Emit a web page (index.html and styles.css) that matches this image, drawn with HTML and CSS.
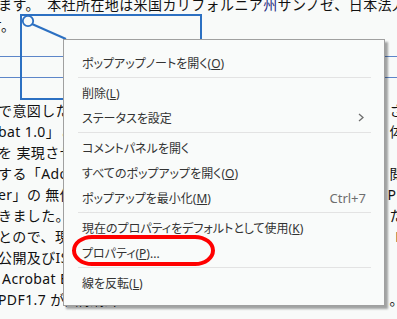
FILE: index.html
```html
<!doctype html>
<html>
<head>
<title>注釈メニュー</title>
<meta charset="utf-8">
<link rel="stylesheet" href="styles.css">
</head>
<body>
	<div class="doc">
		<div class="line first">ます。　本社所在地は米国カリフォルニア<span class="lnk">州</span>サンノゼ、日本法人</div>
		<div class="line second">す。</div>
		<div class="band"></div>
		<div class="para">
			<div class="row"><span>で意図したとおりの表示を</span><span>さ</span></div>
			<div class="row"><span>bat 1.0」とともに発表し</span><span>体</span></div>
			<div class="row"><span>を 実現させることに成功</span><span></span></div>
			<div class="row"><span>する「Adobe Reader」</span><span>閲</span></div>
			<div class="row"><span>er」の 無償配布を開始</span><span>PF</span></div>
			<div class="row"><span>きました。その後</span><span>た</span></div>
			<div class="row"><span>とので、現在では</span><span>P</span></div>
			<div class="row"><span>公開及びISO化</span><span></span></div>
			<div class="row"><span>&nbsp;Acrobat Elements</span><span></span></div>
			<div class="row"><span>PDF1.7 が国際標準</span><span>。</span></div>
		</div>
	</div>

	<!-- 注釈の枠とピン -->
	<div class="annot"></div>
	<svg class="pin" width="70" height="45" viewBox="0 0 70 45">
		<line x1="32" y1="24" x2="66" y2="39" stroke="#2c70c2" stroke-width="2"/>
		<circle cx="28" cy="21" r="5.2" fill="#f8faf9" stroke="#2c70c2" stroke-width="1.8"/>
	</svg>

	<div class="menu">
		<div class="item"><span>ポップアップノートを開く(<u>O</u>)</span></div>
		<div class="sep"></div>
		<div class="item"><span>削除(<u>L</u>)</span></div>
		<div class="item"><span>ステータスを設定</span><svg class="chev" width="6" height="9" viewBox="0 0 6 9"><path d="M1 1 L5 4.5 L1 8" fill="none" stroke="#6e6e6e" stroke-width="1.3"/></svg></div>
		<div class="sep"></div>
		<div class="item"><span>コメントパネルを開く</span></div>
		<div class="item"><span>すべてのポップアップを開く(<u>O</u>)</span></div>
		<div class="item"><span>ポップアップを最小化(<u>M</u>)</span><span class="key">Ctrl+7</span></div>
		<div class="sep"></div>
		<div class="item"><span>現在のプロパティをデフォルトとして使用(<u>K</u>)</span></div>
		<div class="item"><span>プロパティ(<u>P</u>)...</span></div>
		<div class="sep"></div>
		<div class="item"><span>線を反転(<u>L</u>)</span></div>
	</div>

	<div class="mark"></div>
</body>
</html>
```

FILE: styles.css
```css
html, body {
	margin: 0;
	height: 100%;
}
body {
	position: relative;
	overflow: hidden;
	background: #f8faf9;
	color: #111;
	font-family: "Noto Sans", "Noto Sans CJK JP", sans-serif;
}

/* 背景の本文 */
.doc {
	margin-top: -6px;
	font-size: 14px;
	line-height: 21px;
	letter-spacing: .4px;
	white-space: nowrap;
}
.line.first { margin-left: -2px; }
.line.second { margin-left: -12px; }
.lnk { color: #1d2a80; }
.band {
	margin-top: 20px;
	height: 20px;
	border-top: 1px solid #5d86c9;
	border-bottom: 1px solid #5d86c9;
}
.para {
	margin-top: 22px;
	margin-left: -2px;
	margin-right: -7px;
}
.row {
	display: flex;
	justify-content: space-between;
	overflow: hidden;
}

/* 注釈 */
.annot {
	position: absolute;
	left: 20px;
	top: 14px;
	width: 182px;
	height: 86px;
	box-sizing: border-box;
	border: 2px solid #2c70c2;
}
.pin {
	position: absolute;
	left: 0;
	top: 0;
}

/* コンテキストメニュー */
.menu {
	position: absolute;
	left: 63px;
	top: 39px;
	width: 322px;
	box-sizing: border-box;
	padding: 10px 0;
	background: #f9fbfa;
	border: 1px solid #a0a0a0;
	box-shadow: 3px 3px 2px rgba(0,0,0,.35);
	color: #333;
	font-size: 12px;
	font-feature-settings: "palt";
}
.item {
	display: flex;
	align-items: center;
	justify-content: space-between;
	height: 25px;
	padding: 0 18px;
	white-space: nowrap;
}
.item u {
	text-underline-offset: 1px;
}
.key {
	color: #6e6e6e;
	font-size: 13px;
}
.chev {
	margin-right: 2px;
}
.sep {
	height: 1px;
	margin: 2px 13px 2px 14px;
	background: #e3e3e3;
}

/* 赤い囲み */
.mark {
	position: absolute;
	left: 72px;
	top: 235px;
	width: 143px;
	height: 31px;
	box-sizing: border-box;
	border: 4px solid #f00;
	border-radius: 20px / 15.5px;
}
```
